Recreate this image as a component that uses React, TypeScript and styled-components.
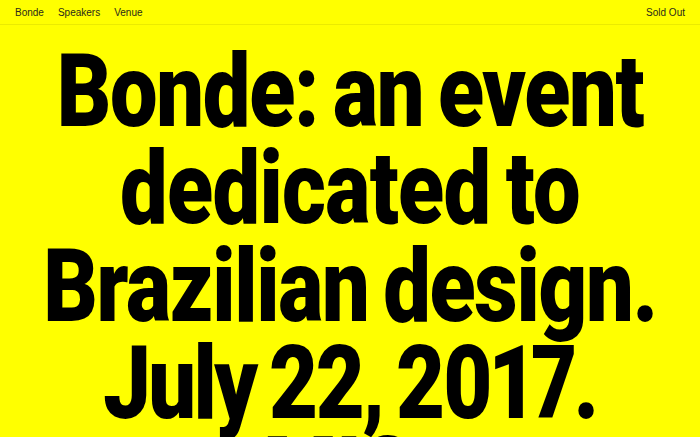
import React from "react";
import styled, { createGlobalStyle } from "styled-components";

const Global = createGlobalStyle`
  html, body {
    margin: 0;
    padding: 0;
    background: #ffff00;
  }
  body {
    font-family: "Liberation Sans", Arial, sans-serif;
    color: #111;
    overflow: hidden;
  }
`;

const Page = styled.div`
  background: #ffff00;
  height: 100vh;
  overflow: hidden;
`;

const Header = styled.header`
  display: flex;
  align-items: center;
  justify-content: space-between;
  height: 24px;
  padding: 0 15px;
  border-bottom: 1px solid rgba(0, 0, 0, 0.08);
`;

const Nav = styled.nav`
  display: flex;
  gap: 14px;
`;

const NavLink = styled.a`
  font-family: "Liberation Sans", Arial, sans-serif;
  font-size: 10px;
  color: #2a2a1a;
  text-decoration: none;
`;

const Headline = styled.h1`
  margin: 18px 0 0;
  display: flex;
  flex-direction: column;
  align-items: center;
  font-family: Roboto, "Liberation Sans", Arial, sans-serif;
  font-weight: 900;
  font-size: 102px;
  line-height: 97.3px;
  letter-spacing: -0.015em;
  word-spacing: -0.06em;
  font-variant-numeric: proportional-nums;
  color: #000;
  transform: scaleX(0.83);
  transform-origin: center top;
  white-space: nowrap;
`;

const Line = styled.span<{ $lift?: number; $tracking?: string }>`
  display: block;
  margin-top: ${(p) => (p.$lift ? -p.$lift : 0)}px;
  ${(p) => (p.$tracking ? `letter-spacing: ${p.$tracking};` : "")}
`;

export default function App() {
  return (
    <Page>
      <Global />
      <Header>
        <Nav>
          <NavLink href="#">Bonde</NavLink>
          <NavLink href="#">Speakers</NavLink>
          <NavLink href="#">Venue</NavLink>
        </Nav>
        <NavLink href="#">Sold Out</NavLink>
      </Header>
      <Headline>
        <Line>Bonde: an event</Line>
        <Line $tracking="-0.008em">dedicated to</Line>
        <Line>Brazilian design.</Line>
        <Line $tracking="-0.03em">July 22, 2017.</Line>
        <Line $lift={6}>MIS.</Line>
      </Headline>
    </Page>
  );
}
